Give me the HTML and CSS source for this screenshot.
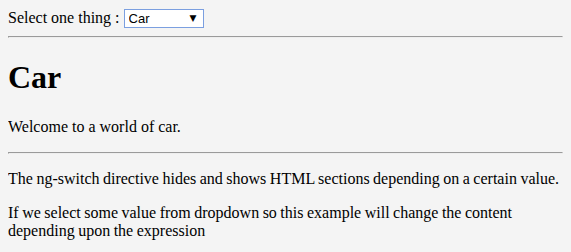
FILE: index.html
```html
<!DOCTYPE html>
<html lang="en">
<head>
  <meta charset="UTF-8">
  <title>ng-switch</title>
  <link rel="stylesheet" href="styles.css">
</head>
<body>
  <div class="picker">
    Select one thing :
    <span class="select-wrap">
      <select class="thing-select">
        <option>Car</option>
        <option>Bike</option>
        <option>Bus</option>
      </select>
    </span>
  </div>
  <hr>
  <div class="switch-area">
    <h1>Car</h1>
    <p>Welcome to a world of car.</p>
  </div>
  <hr>
  <p class="note">The ng-switch directive hides and shows HTML sections depending on a certain value.</p>
  <p class="note">If we select some value from dropdown so this example will change the content depending upon the expression</p>
</body>
</html>
```
FILE: styles.css
```css
body {
  margin: 8px;
  background-color: #f4f4f4;
  color: #000;
  font-family: "Liberation Serif", "Times New Roman", serif;
  font-size: 16px;
}

.picker {
  line-height: 20px;
}

.select-wrap {
  position: relative;
  display: inline-block;
  vertical-align: top;
}

.thing-select {
  appearance: none;
  -webkit-appearance: none;
  width: 80px;
  height: 19px;
  margin: 0;
  padding: 0 0 0 4px;
  border: 1px solid #7b9fe0;
  border-radius: 0;
  background-color: #fff;
  color: #000;
  font-family: "Liberation Sans", Arial, sans-serif;
  font-size: 13px;
  outline: none;
}

.select-wrap::after {
  content: "▼";
  position: absolute;
  right: 7px;
  top: 2px;
  font-family: "DejaVu Sans", sans-serif;
  font-size: 9px;
  line-height: 16px;
  pointer-events: none;
}

.note {
  word-spacing: -0.5px;
}
```
